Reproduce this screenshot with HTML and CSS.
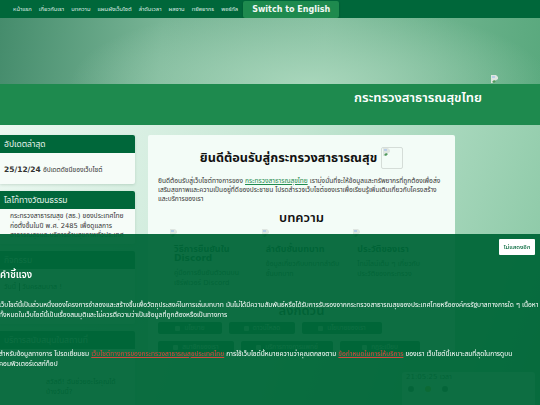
FILE: index.html
```html
<!DOCTYPE html>
<html lang="en">
<head>
    <meta charset="UTF-8">
    <meta name="viewport" content="width=device-width, initial-scale=1.0">
    <title>กระทรวงสาธารณสุขไทย</title>
    <link rel="stylesheet" href="styles.css">
</head>
<body>

    <!-- Top Nav -->
    <nav class="topnav">
        <a href="#">หน้าแรก</a>
        <a href="#">เกี่ยวกับเรา</a>
        <a href="#">บทความ</a>
        <a href="#">แผนผังเว็บไซต์</a>
        <a href="#">ลำดับเวลา</a>
        <a href="#">ผลงาน</a>
        <a href="#">ทรัพยากร</a>
        <a href="#">พอร์ทัล</a>
        <button class="lang-button">Switch to English</button>
    </nav>

    <!-- Hero -->
    <div class="hero">
        <svg class="broken-icon" width="7" height="8" viewBox="0 0 7 8"><path d="M0 0h5l2 2v2L4 6 2 8H0z" fill="#dfe6e1"/><path d="M1 7l2-2 2 1-2 2z" fill="#4f9a5c"/><rect x="1" y="1" width="3" height="2" fill="#b9cfe8"/></svg>
    </div>
    <header class="site-title">
        <h1>กระทรวงสาธารณสุขไทย</h1>
    </header>

    <div class="layout">
        <!-- Sidebar -->
        <aside class="sidebar">
            <div class="side-card">
                <h3>อัปเดตล่าสุด</h3>
                <p class="update"><b>25/12/24</b> อัปเดตดัชนีของเว็บไซต์</p>
            </div>
            <div class="side-card">
                <h3>โลโก้ทางวัฒนธรรม</h3>
                <p class="about">กระทรวงสาธารณสุข (สธ.) ของประเทศไทย<br>ก่อตั้งขึ้นในปี พ.ศ. 2485 เพื่อดูแลการ<br>สาธารณสุขและบริการด้านสุขภาพทั่วประเทศ</p>
            </div>
            <div class="side-card">
                <h3>กิจกรรม</h3>
                <p class="event"><span>วันนี้</span> วันครสมบาส !</p>
            </div>
            <div class="side-card">
                <h3>บริการสนับสนุนในสถานที่</h3>
                <p class="chat">สวัสดี! ฉันช่วยอะไรคุณได้<br>บ้างวันนี้?</p>
            </div>
        </aside>

        <!-- Main Card -->
        <main class="main-card">
            <div class="welcome">
                <h2>ยินดีต้อนรับสู่กระทรวงสาธารณสุข</h2>
                <span class="logo-box">
                    <svg class="broken-icon" width="7" height="8" viewBox="0 0 7 8"><path d="M0 0h5l2 2v2L4 6 2 8H0z" fill="#dfe6e1"/><path d="M1 7l2-2 2 1-2 2z" fill="#4f9a5c"/><rect x="1" y="1" width="3" height="2" fill="#b9cfe8"/></svg>
                </span>
            </div>
            <p class="intro">ยินดีต้อนรับสู่เว็บไซต์ทางการของ <a href="#">กระทรวงสาธารณสุขไทย</a> เรามุ่งมั่นที่จะให้ข้อมูลและทรัพยากรที่ถูกต้องเพื่อส่ง<br>เสริมสุขภาพและความเป็นอยู่ที่ดีของประชาชน โปรดสำรวจเว็บไซต์ของเราเพื่อเรียนรู้เพิ่มเติมเกี่ยวกับโครงสร้าง<br>และบริการของเรา</p>

            <h2 class="section-title">บทความ</h2>
            <div class="articles">
                <div class="article">
                    <svg class="broken-icon" width="7" height="8" viewBox="0 0 7 8"><path d="M0 0h5l2 2v2L4 6 2 8H0z" fill="#dfe6e1"/><path d="M1 7l2-2 2 1-2 2z" fill="#4f9a5c"/><rect x="1" y="1" width="3" height="2" fill="#b9cfe8"/></svg>
                    <h4>วิธีการยืนยันใน Discord</h4>
                    <p>คู่มือการยืนยันตัวตนบนเซิร์ฟเวอร์ Discord</p>
                </div>
                <div class="article">
                    <svg class="broken-icon" width="7" height="8" viewBox="0 0 7 8"><path d="M0 0h5l2 2v2L4 6 2 8H0z" fill="#dfe6e1"/><path d="M1 7l2-2 2 1-2 2z" fill="#4f9a5c"/><rect x="1" y="1" width="3" height="2" fill="#b9cfe8"/></svg>
                    <h4>ลำดับชั้นบทบาท</h4>
                    <p>ข้อมูลเกี่ยวกับบทบาทลำดับชั้นบทบาท</p>
                </div>
                <div class="article">
                    <svg class="broken-icon" width="7" height="8" viewBox="0 0 7 8"><path d="M0 0h5l2 2v2L4 6 2 8H0z" fill="#dfe6e1"/><path d="M1 7l2-2 2 1-2 2z" fill="#4f9a5c"/><rect x="1" y="1" width="3" height="2" fill="#b9cfe8"/></svg>
                    <h4>ประวัติของเรา</h4>
                    <p>ไทม์ไลน์เต็ม ๆ เกี่ยวกับประวัติของกระทรวง</p>
                </div>
            </div>

            <h2 class="section-title links-title">ลิงก์ด่วน</h2>
            <div class="quick-links">
                <a href="#" class="w64">นโยบาย</a>
                <a href="#" class="w66">ดาวน์โหลด</a>
                <a href="#" class="w80">นโยบายของเรา</a>
                <a href="#" class="w76">สมาชิกของเรา</a>
                <a href="#" class="w92">บริการทางการแพทย์</a>
                <a href="#" class="w80">กฎระเบียบ</a>
            </div>
        </main>
    </div>

    <!-- Clock Widget -->
    <div class="clock">
        <p>21:05:25 เวลา</p>
        <div class="clock-icons">
            <span class="dot"></span>
            <span class="dot sun"></span>
            <span class="dot"></span>
        </div>
    </div>

    <!-- Notice -->
    <div class="notice">
        <button class="notice-close">ไม่แสดงอีก</button>
        <h3>คำชี้แจง</h3>
        <p>เว็บไซต์นี้เป็นส่วนหนึ่งของโครงการจำลองและสร้างขึ้นเพื่อวัตถุประสงค์ในการเล่นบทบาท มันไม่ได้มีความสัมพันธ์หรือได้รับการรับรองจากกระทรวงสาธารณสุขของประเทศไทยหรือองค์กรรัฐบาลทางการใด ๆ เนื้อหา<br>ทั้งหมดในเว็บไซต์นี้เป็นเรื่องสมมุติและไม่ควรตีความว่าเป็นข้อมูลที่ถูกต้องหรือเป็นทางการ</p>
        <p class="notice-second">สำหรับข้อมูลทางการ โปรดเยี่ยมชม <a href="#">เว็บไซต์ทางการของกระทรวงสาธารณสุขประเทศไทย</a> การใช้เว็บไซต์นี้หมายความว่าคุณตกลงตาม <a href="#">ข้อกำหนดในการให้บริการ</a> ของเรา เว็บไซต์นี้เหมาะสมที่สุดในการดูบน<br>คอมพิวเตอร์เดสก์ท็อป</p>
    </div>

</body>
</html>
```

FILE: styles.css
```css
html, body {
    height: 405px;
    overflow: hidden;
}
body {
    margin: 0;
    font-family: "DejaVu Sans", "Noto Sans Thai", sans-serif;
    background: linear-gradient(110deg, #f2fbf6 0%, #c4e6d3 50%, #84c5a0 100%);
    color: #1a2a20;
}
.topnav {
    height: 18px;
    padding-left: 13px;
    display: flex;
    align-items: center;
    gap: 7px;
    background: #00673a;
    box-sizing: border-box;
}
.topnav a {
    font-size: 5.8px;
    color: #dcebe3;
    text-decoration: none;
}
.lang-button {
    margin-left: -2px;
    width: 96px;
    height: 17px;
    border: none;
    border-radius: 2px;
    background: #1e8a4e;
    box-shadow: 0 1px 2px rgba(0, 40, 20, 0.3);
    color: #f2f8f4;
    font-family: "DejaVu Sans", sans-serif;
    font-size: 8px;
    font-weight: bold;
    padding: 0;
}
.hero {
    height: 66px;
    position: relative;
    background:
        radial-gradient(ellipse 240px 80px at 310px 66px, #a8d6bb, rgba(168, 214, 187, 0)),
        linear-gradient(95deg, #458c6c 0%, #79b596 30%, #82bd9d 60%, #5aa97e 100%);
}
.hero .broken-icon {
    position: absolute;
    left: 491px;
    top: 57px;
}
.site-title {
    height: 41px;
    padding: 6px 58px 0 0;
    box-sizing: border-box;
    background: #1e8a4e;
    text-align: right;
}
.site-title h1 {
    margin: 0;
    font-size: 13px;
    font-weight: 600;
    color: #fff;
    line-height: 16px;
}
.layout {
    display: flex;
    align-items: flex-start;
    gap: 13px;
    padding-top: 10px;
}
.sidebar {
    width: 135px;
    display: flex;
    flex-direction: column;
    gap: 7px;
}
.side-card {
    background: #f6fcf8;
    border-radius: 0 2px 2px 0;
    box-shadow: 0 1px 3px rgba(0, 60, 30, 0.15);
}
.side-card h3 {
    margin: 0;
    height: 18px;
    padding-left: 4px;
    background: #00673a;
    border-radius: 0 2px 0 0;
    color: #e6f3ec;
    font-size: 8.5px;
    font-weight: normal;
    line-height: 18px;
}
.update {
    margin: 0;
    padding: 12px 4px 9px;
    font-size: 6.6px;
    line-height: 10px;
    color: #333;
}
.update b {
    font-size: 7.5px;
}
.about {
    margin: 0;
    padding: 3px 0 3px 10px;
    font-size: 6.7px;
    line-height: 9.7px;
    white-space: nowrap;
    color: #333;
}
.event {
    margin: 0;
    padding: 13px 4px 32px;
    font-size: 7px;
    line-height: 10px;
}
.event span {
    padding-right: 3px;
    border-right: 1px solid #333;
}
.chat {
    margin: 0;
    padding: 29px 0 20px 46px;
    font-size: 7px;
    line-height: 9.5px;
}
.main-card {
    width: 307px;
    height: 222px;
    padding: 0 10px;
    box-sizing: border-box;
    background: #f3fcf7;
    border-radius: 2px;
}
.welcome {
    height: 41px;
    display: flex;
    justify-content: center;
    align-items: center;
    gap: 4px;
    padding-top: 5px;
    box-sizing: border-box;
}
.welcome h2 {
    margin: 0;
    font-size: 12.7px;
    font-weight: 700;
    color: #111;
}
.logo-box {
    width: 22px;
    height: 22px;
    box-sizing: border-box;
    border: 1px solid #d5ddd8;
    border-radius: 2px;
    padding-left: 1px;
}
.logo-box .broken-icon {
    display: block;
}
.intro {
    margin: 1px 0 0;
    font-size: 6.6px;
    line-height: 9px;
    white-space: nowrap;
    color: #333;
}
.intro a {
    color: #1e8a4e;
}
.section-title {
    margin: 4px 0 0;
    font-size: 13px;
    font-weight: 600;
    line-height: 20px;
    text-align: center;
    color: #111;
}
.articles {
    display: flex;
    margin-top: 1px;
    padding-left: 12px;
}
.article {
    width: 93px;
    box-sizing: border-box;
    padding: 0 10px 0 4px;
}
.article .broken-icon {
    display: block;
    margin: 0 0 8px -4px;
}
.article h4 {
    margin: 0;
    font-size: 9px;
    line-height: 9px;
    color: #06351e;
}
.article p {
    margin: 5px 0 0;
    font-size: 7px;
    line-height: 10px;
    color: #333;
}
.links-title {
    margin-top: 13px;
}
.quick-links {
    display: flex;
    flex-wrap: wrap;
    gap: 7px;
    margin-top: 1px;
}
.quick-links a {
    height: 12px;
    display: flex;
    align-items: center;
    justify-content: center;
    gap: 4px;
    background: #00673a;
    border-radius: 2px;
    font-size: 6.5px;
    color: #fff;
    text-decoration: none;
}
.quick-links a::before {
    content: "";
    width: 5px;
    height: 5px;
    border-radius: 1px;
    background: #cfe5d9;
}
.w64 { width: 64px; }
.w66 { width: 66px; }
.w76 { width: 76px; }
.w80 { width: 80px; }
.w92 { width: 92px; }
.clock {
    position: fixed;
    left: 402px;
    top: 372px;
    width: 133px;
    height: 40px;
    background: #f3fcf7;
    border-radius: 3px;
}
.clock p {
    margin: 0 0 0 4px;
    font-size: 7px;
    line-height: 10px;
    color: #333;
}
.clock-icons {
    display: flex;
    gap: 11px;
    margin: 4px 0 0 6px;
}
.dot {
    width: 6px;
    height: 6px;
    border-radius: 50%;
    background: #555;
}
.dot.sun {
    background: #e0a800;
}
.notice {
    position: fixed;
    left: 0;
    top: 234px;
    width: 540px;
    height: 171px;
    padding-top: 34px;
    box-sizing: border-box;
    background: rgba(0, 102, 56, 0.95);
    color: #fff;
}
.notice h3 {
    margin: 0;
    font-size: 9.6px;
    line-height: 14px;
    font-weight: 600;
}
.notice p {
    margin: 18px 0 0 -1px;
    font-size: 6.65px;
    line-height: 10px;
    white-space: nowrap;
}
.notice .notice-second {
    margin-top: 29px;
}
.notice a {
    color: #d8463c;
}
.notice-close {
    position: absolute;
    left: 499px;
    top: 5px;
    width: 36px;
    height: 16px;
    border: none;
    border-radius: 1px;
    background: #fff;
    color: #00673a;
    font-family: "Noto Sans Thai", sans-serif;
    font-size: 6px;
    font-weight: 500;
    padding: 0;
}
```
